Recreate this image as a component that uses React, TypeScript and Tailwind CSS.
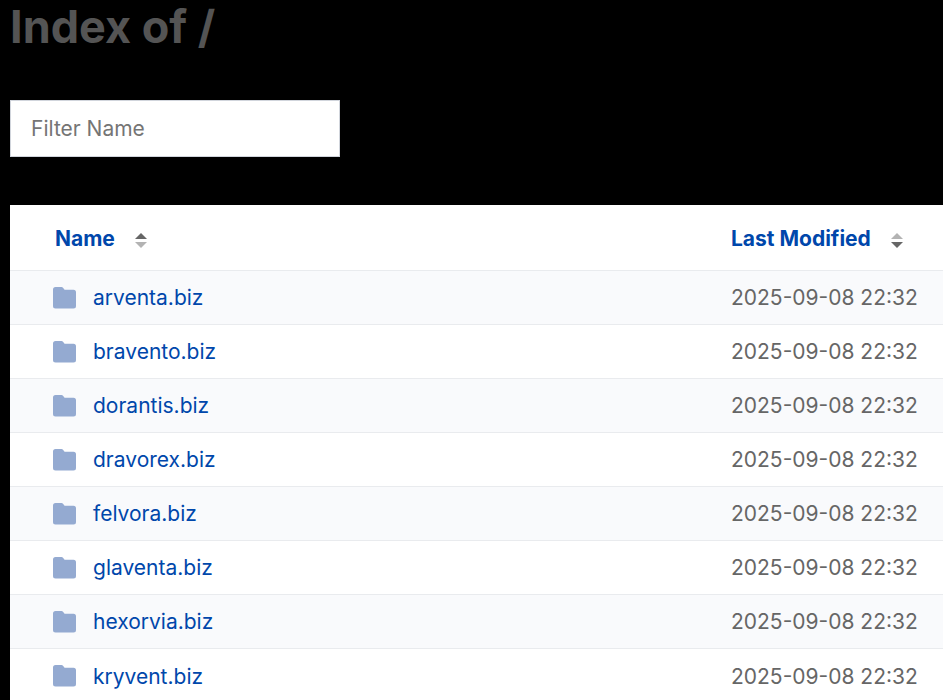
const folders = [
  "arventa.biz",
  "bravento.biz",
  "dorantis.biz",
  "dravorex.biz",
  "felvora.biz",
  "glaventa.biz",
  "hexorvia.biz",
  "kryvent.biz",
];

const FolderIcon = () => (
  <svg viewBox="0 0 23 22" className="h-[22px] w-[23px] shrink-0 fill-[#94aad1]" aria-hidden="true">
    <path d="M2.5 0h6a2 2 0 0 1 1.5.7L11.6 2.8H20.5a2.5 2.5 0 0 1 2.5 2.5v13.7a2.5 2.5 0 0 1-2.5 2.5h-18a2.5 2.5 0 0 1-2.5-2.5v-16.5a2.5 2.5 0 0 1 2.5-2.5z" />
  </svg>
);

const SortIcon = ({ up }: { up: boolean }) => (
  <svg viewBox="0 0 12 15" className="mt-1 h-[15px] w-3" aria-hidden="true">
    <path d="M6 0l6 6H0z" className={up ? "fill-[#666666]" : "fill-[#b3b3b3]"} />
    <path d="M6 15l6-6H0z" className={up ? "fill-[#b3b3b3]" : "fill-[#666666]"} />
  </svg>
);

const App = () => {
  return (
    <div className="min-h-screen bg-black pl-[10px] font-['Inter',sans-serif] text-[21px] text-[#666666]">
      <h1 className="pb-[46px] text-[45px] leading-[54px] font-bold text-[#545454]">
        Index of /
      </h1>

      <input
        type="text"
        aria-label="Filter Name"
        placeholder="Filter Name"
        className="block h-[57px] w-[330px] border border-gray-300 bg-white px-5 placeholder:text-[#757575]"
      />

      <table className="mt-12 w-full bg-white text-left">
        <thead>
          <tr className="h-[65px]">
            <th className="pt-[2px] pl-[45px] font-bold">
              <button className="flex items-center gap-5 text-[#0047ab]">
                Name <SortIcon up />
              </button>
            </th>
            <th className="w-[212px] pt-[2px] font-bold">
              <button className="flex items-center gap-5 whitespace-nowrap text-[#0047ab]">
                Last Modified <SortIcon up={false} />
              </button>
            </th>
          </tr>
        </thead>
        <tbody>
          {folders.map((name) => (
            <tr key={name} className="h-[54px] border-t border-[#e9ebee] odd:bg-[#f9fafc]">
              <td className="pt-[2px] pl-[43px]">
                <a href="#" className="flex items-center gap-[17px] text-[#0047ab]">
                  <FolderIcon />
                  {name}
                </a>
              </td>
              <td className="pt-[2px] whitespace-nowrap">2025-09-08 22:32</td>
            </tr>
          ))}
        </tbody>
      </table>
    </div>
  );
};

export default App;
